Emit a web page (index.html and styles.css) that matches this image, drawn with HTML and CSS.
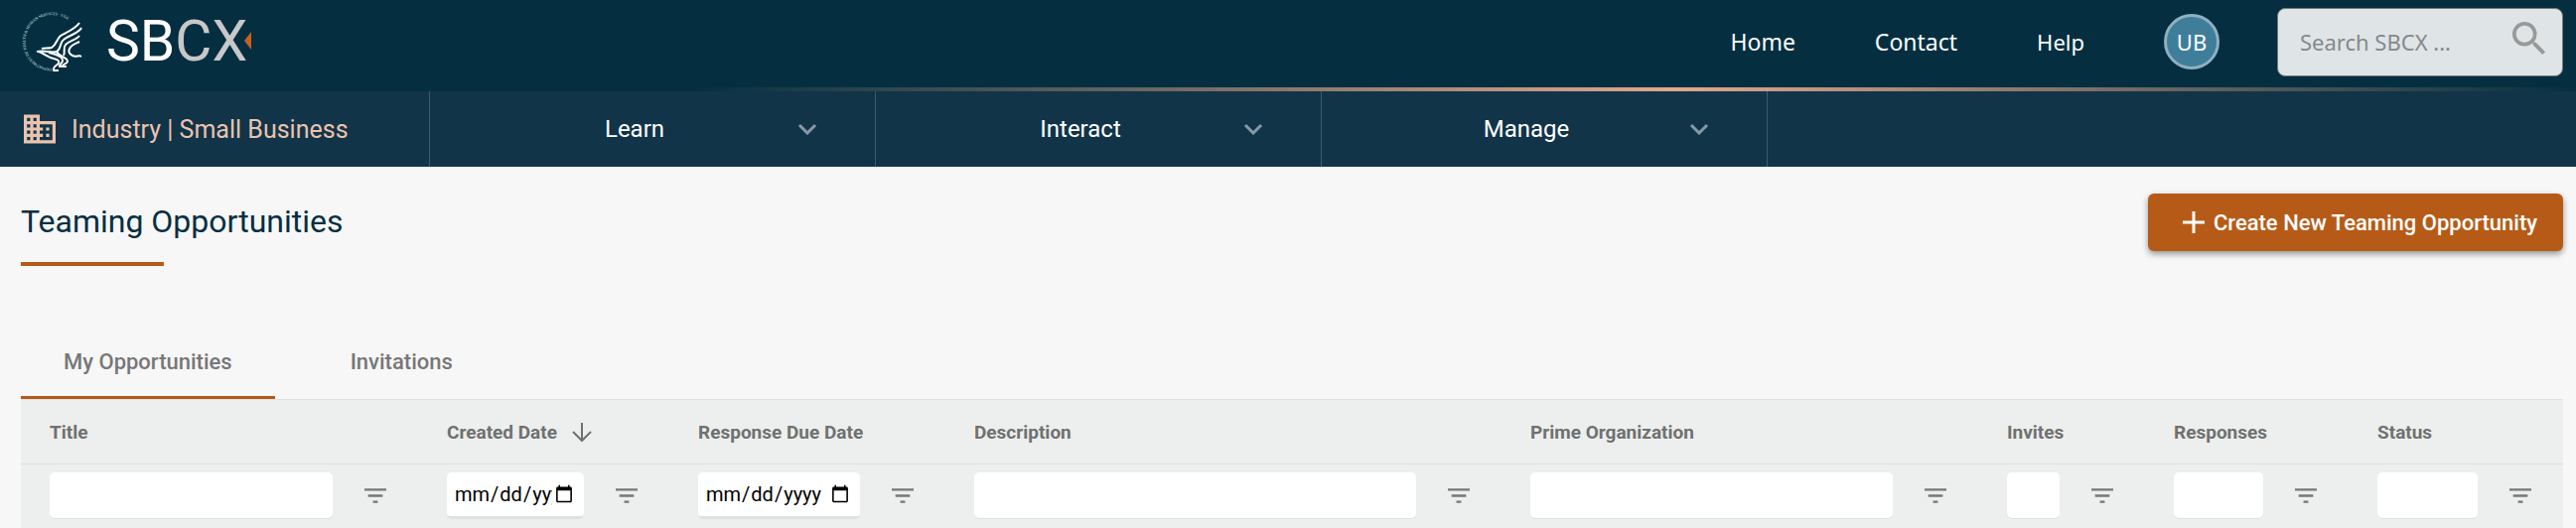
FILE: index.html
```html
<!DOCTYPE html>
<html lang="en">
  <head>
    <meta charset="UTF-8" />
    <meta name="viewport" content="width=device-width, initial-scale=1.0" />
    <title>SBCX - Teaming Opportunities</title>
    <link rel="stylesheet" href="styles.css">
  </head>

  <body>
    <!-- shared icons -->
    <svg class="sprite" aria-hidden="true">
      <symbol id="icon-filter" viewBox="3 6 18 12"><path d="M10 18h4v-2h-4v2zM3 6v2h18V6H3zm3 7h12v-2H6v2z" /></symbol>
      <symbol id="icon-chevron" viewBox="0 0 20 12"><path d="M2 2l8 8 8-8" fill="none" stroke="currentColor" stroke-width="3" /></symbol>
    </svg>

    <header class="header">
      <a href="#" class="logo" aria-label="SBCX home">
        <svg width="244" height="72" viewBox="0 0 244 72">
          <path id="seal-ring" d="M31 63A27 27 0 1 1 57 27" fill="none" />
          <text class="seal-text"><textPath href="#seal-ring">DEPARTMENT OF HEALTH &amp; HUMAN SERVICES · USA</textPath></text>
          <g fill="none" stroke="#fff" stroke-width="2" stroke-linejoin="round">
            <path d="M59 17C55 23 47 26 40 30C36 33 36 39 31 42C27 43 24 42 21 43" />
            <path d="M61 22C58 28 49 29 43 34C39 37 41 43 36 46C31 48 24 44 16 46" />
            <path d="M59 30C56 34 49 35 45 39C42 43 45 46 43 50" />
            <path d="M59 36C55 38 51 39 49 43C47 47 50 49 52 50C56 52 58 49 61 51" />
            <path d="M18 46C24 48 27 52 33 53C37 54 39 55 38 58C36 60 32 61 33 65H38" />
            <path d="M28 47C35 49 41 50 42 54C43 57 39 58 39 61H45" />
            <path d="M36 46C39 52 47 51 47 56C46 59 42 58 42 61H46" />
          </g>
          <text class="logo-text" x="86" y="55">SB<tspan class="logo-text-gray">CX</tspan></text>
          <path d="M225 35l7-9v18z" fill="#c95f1f" />
        </svg>
      </a>

      <nav class="top-links">
        <a href="#">Home</a>
        <a href="#">Contact</a>
        <a href="#" class="help">Help</a>
        <button class="avatar">UB</button>
      </nav>

      <form class="search">
        <input type="text" name="search" placeholder="Search SBCX ..." aria-label="Search SBCX" />
        <button type="submit" class="search-btn" aria-label="Search">
          <svg width="34" height="34" viewBox="3 3 18 18"><path d="M15.5 14h-.79l-.28-.27A6.47 6.47 0 0 0 16 9.5 6.5 6.5 0 1 0 9.5 16c1.61 0 3.09-.59 4.23-1.57l.27.28v.79l5 4.99L20.49 19l-4.99-5zm-6 0C7.01 14 5 11.99 5 9.5S7.01 5 9.5 5 14 7.01 14 9.5 11.99 14 9.5 14z" /></svg>
        </button>
      </form>
    </header>

    <nav class="menu">
      <a href="#" class="section-name">
        <svg width="32" height="30" viewBox="2 3 20 18"><path d="M12 7V3H2v18h20V7H12zM6 19H4v-2h2v2zm0-4H4v-2h2v2zm0-4H4V9h2v2zm0-4H4V5h2v2zm4 12H8v-2h2v2zm0-4H8v-2h2v2zm0-4H8V9h2v2zm0-4H8V5h2v2zm10 12h-8v-2h2v-2h-2v-2h2v-2h-2V9h8v10zm-2-8h-2v2h2v-2zm0 4h-2v2h2v-2z" /></svg>
        <span>Industry | Small Business</span>
      </a>
      <button class="menu-item"><span>Learn</span><svg class="chevron"><use href="#icon-chevron" /></svg></button>
      <button class="menu-item"><span>Interact</span><svg class="chevron"><use href="#icon-chevron" /></svg></button>
      <button class="menu-item"><span>Manage</span><svg class="chevron"><use href="#icon-chevron" /></svg></button>
    </nav>

    <main>
      <div class="page-title">
        <h1>Teaming Opportunities</h1>
        <button class="create-btn">
          <svg width="24" height="24" viewBox="0 0 24 24"><path d="M12 1v22M1 12h22" /></svg>
          <span>Create New Teaming Opportunity</span>
        </button>
      </div>

      <div class="tabs" role="tablist">
        <button class="tab active" role="tab" aria-selected="true">My Opportunities</button>
        <button class="tab" role="tab" aria-selected="false">Invitations</button>
      </div>

      <table class="grid">
        <colgroup>
          <col class="col-title" />
          <col class="col-created" />
          <col class="col-due" />
          <col class="col-description" />
          <col class="col-prime" />
          <col class="col-invites" />
          <col class="col-responses" />
          <col class="col-status" />
        </colgroup>
        <thead>
          <tr>
            <th id="th-title">Title</th>
            <th id="th-created">Created Date <svg class="sort" width="20" height="20" viewBox="0 0 20 20"><path d="M10 0v18M1 9l9 9 9-9" /></svg></th>
            <th id="th-due">Response Due Date</th>
            <th id="th-description">Description</th>
            <th id="th-prime">Prime Organization</th>
            <th id="th-invites">Invites</th>
            <th id="th-responses">Responses</th>
            <th id="th-status">Status</th>
          </tr>
        </thead>
        <tbody>
          <tr>
            <td><div class="filter"><input type="text" aria-labelledby="th-title" /><button aria-label="Filter title"><svg><use href="#icon-filter" /></svg></button></div></td>
            <td><div class="filter"><input type="date" aria-labelledby="th-created" /><button aria-label="Filter created date"><svg><use href="#icon-filter" /></svg></button></div></td>
            <td><div class="filter"><input type="date" aria-labelledby="th-due" /><button aria-label="Filter response due date"><svg><use href="#icon-filter" /></svg></button></div></td>
            <td><div class="filter"><input type="text" aria-labelledby="th-description" /><button aria-label="Filter description"><svg><use href="#icon-filter" /></svg></button></div></td>
            <td><div class="filter"><input type="text" aria-labelledby="th-prime" /><button aria-label="Filter prime organization"><svg><use href="#icon-filter" /></svg></button></div></td>
            <td><div class="filter"><input type="text" aria-labelledby="th-invites" /><button aria-label="Filter invites"><svg><use href="#icon-filter" /></svg></button></div></td>
            <td><div class="filter"><input type="text" aria-labelledby="th-responses" /><button aria-label="Filter responses"><svg><use href="#icon-filter" /></svg></button></div></td>
            <td><div class="filter"><input type="text" aria-labelledby="th-status" /><button aria-label="Filter status"><svg><use href="#icon-filter" /></svg></button></div></td>
          </tr>
        </tbody>
      </table>
    </main>
  </body>
</html>
```

FILE: styles.css
```css
*,
*::before,
*::after {
  box-sizing: border-box;
  margin: 0;
  padding: 0;
}

body {
  font-family: Roboto, sans-serif;
  background: #f7f7f7;
  color: #052f41;
}

a {
  color: inherit;
  text-decoration: none;
}

button {
  font-family: inherit;
  color: inherit;
  background: none;
  border: none;
  cursor: pointer;
}

.sprite {
  display: none;
}

/* top bar */
.header {
  position: relative;
  display: flex;
  align-items: center;
  height: 92px;
  padding: 0 13px 8px 21px;
  background: #052f41;
  color: #fff;
}

/* glow line along the bottom of the top bar */
.header::after {
  content: "";
  position: absolute;
  left: 27%;
  right: 0;
  bottom: 0;
  height: 4px;
  background: linear-gradient(90deg, rgba(226, 168, 138, 0), #e2a88a 52%, rgba(226, 168, 138, 0));
}

.logo {
  display: flex;
}

.logo svg {
  overflow: visible;
}

.logo-text {
  font-size: 57px;
  fill: #fff;
}

.logo-text-gray {
  fill: #c8c8c8;
}

.seal-text {
  font-family: "Liberation Serif", serif;
  font-size: 4px;
  fill: #dfe5e8;
}

.top-links {
  display: flex;
  align-items: center;
  gap: 80px;
  margin-left: auto;
  font-family: "Noto Sans", sans-serif;
  font-size: 23px;
}

.top-links .help {
  font-size: 22px;
}

.avatar {
  width: 56px;
  height: 56px;
  border: 3px solid #8fb0c1;
  border-radius: 50%;
  background: #3f7e9b;
  font-size: 22px;
}

.search {
  display: flex;
  align-items: center;
  width: 288px;
  height: 69px;
  margin-left: 58px;
  padding: 0 16px 0 22px;
  border: 1px solid #777;
  border-radius: 8px;
  background: #dfe4e7;
}

.search input {
  flex: 1;
  min-width: 0;
  border: none;
  outline: none;
  background: none;
  font-family: "Noto Sans", sans-serif;
  font-size: 22px;
}

.search input::placeholder {
  color: #84898c;
}

.search-btn {
  display: flex;
  padding-bottom: 6px;
}

.search-btn svg {
  fill: #999;
}

/* menu */
.menu {
  display: flex;
  height: 76px;
  background: #113448;
  color: #fff;
}

.section-name {
  display: flex;
  align-items: center;
  gap: 16px;
  width: 433px;
  padding-left: 24px;
  border-right: 1px solid #41596a;
  color: #eac3ae;
  font-size: 25px;
}

.section-name svg {
  fill: #eac3ae;
}

.menu-item {
  display: flex;
  align-items: center;
  width: 449px;
  padding: 0 58px 0 42px;
  border-right: 1px solid #41596a;
  font-size: 24px;
}

.menu-item span {
  flex: 1;
}

.chevron {
  width: 20px;
  height: 12px;
  color: #8799a4;
}

/* page */
main {
  padding: 0 13px 0 21px;
}

.page-title {
  display: flex;
  justify-content: space-between;
  align-items: flex-start;
  padding-top: 27px;
}

h1 {
  padding-top: 8px;
  font-size: 32px;
  font-weight: 400;
  line-height: 40px;
}

h1::after {
  content: "";
  display: block;
  width: 144px;
  height: 4px;
  margin-top: 21px;
  background: #b65b17;
}

.create-btn {
  display: flex;
  align-items: center;
  gap: 8px;
  height: 58px;
  padding: 0 26px 0 34px;
  border-radius: 6px;
  background: #b65b17;
  box-shadow: 0 3px 6px rgba(0, 0, 0, 0.4);
  color: #fff;
  font-size: 22px;
  font-weight: 500;
}

.create-btn svg {
  fill: none;
  stroke: #fff;
  stroke-width: 3;
}

.tabs {
  display: flex;
  margin-top: 61px;
}

.tab {
  height: 73px;
  padding: 0 43px;
  border-bottom: 3px solid transparent;
  color: #777;
  font-size: 22px;
  font-weight: 500;
}

.tab.active {
  border-bottom-color: #b65b17;
}

.tab + .tab {
  padding: 0 76px;
}

/* opportunities table */
.grid {
  width: 100%;
  table-layout: fixed;
  border-collapse: collapse;
  background: #edefee;
}

.col-title { width: 400px; }
.col-created { width: 253px; }
.col-due { width: 278px; }
.col-description { width: 560px; }
.col-prime { width: 480px; }
.col-invites { width: 168px; }
.col-responses { width: 205px; }
.col-status { width: 216px; }

.grid tr {
  height: 65px;
  border-top: 1px solid #dfe1e1;
}

.grid tbody tr {
  border-bottom: 1px solid #dfe1e1;
}

.grid th,
.grid td {
  padding-left: 29px;
  text-align: left;
  vertical-align: middle;
}

.grid td {
  padding-bottom: 2px;
}

.grid th {
  color: #6f7170;
  font-size: 19px;
  font-weight: 700;
  white-space: nowrap;
}

.sort {
  margin-left: 10px;
  vertical-align: middle;
  fill: none;
  stroke: #6f7170;
  stroke-width: 2;
}

.filter {
  display: flex;
  align-items: center;
}

.filter input {
  flex: 1;
  min-width: 0;
  height: 46px;
  border: none;
  border-radius: 5px;
  box-shadow: 0 1px 0 #e0e0e0;
  background: #fff;
  font-family: inherit;
  font-size: 20px;
}

.filter input[type="date"] {
  height: 47px;
  padding: 0 8px 0 7px;
  border-bottom: 3px solid #e0e0e0;
  box-shadow: none;
}

.filter button {
  display: flex;
  justify-content: center;
  width: 86px;
}

.filter svg {
  width: 22px;
  height: 15px;
  fill: #777;
}
```
